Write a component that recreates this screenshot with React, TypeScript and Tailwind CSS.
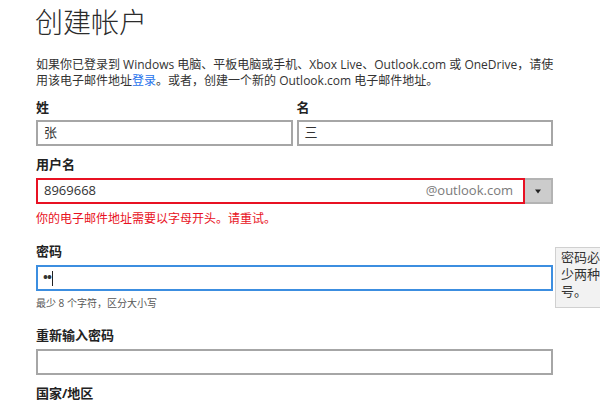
import React from "react";

const font = { fontFamily: '"Open Sans", "Noto Sans CJK SC", sans-serif' };

export default function App() {
  return (
    <div
      className="relative w-[600px] h-[400px] overflow-hidden bg-white text-[#262626]"
      style={font}
    >
      <div className="pl-[36px] pt-[4px] w-[553px]">
        <h1 className="h-[36px] leading-[36px] text-[28px] font-light text-[#2b2b2b] -ml-[1px]">
          创建帐户
        </h1>
        <p className="mt-[17px] text-[12px] leading-[16px] text-[#333] whitespace-nowrap">
          如果你已登录到 Windows 电脑、平板电脑或手机、Xbox Live、Outlook.com 或 OneDrive，请使
          <br />
          用该电子邮件地址<span className="text-[#2672ec]">登录</span>。或者，创建一个新的 Outlook.com 电子邮件地址。
        </p>

        <div className="mt-[10px] grid grid-cols-2 gap-x-[4px]">
          <div>
            <div className="h-[16px] leading-[16px] text-[13px] font-bold text-[#222]">姓</div>
            <div className="mt-[5px] h-[26px] border-2 border-[#a6a6a6] flex items-center px-[6px] text-[13px] text-[#333]">
              张
            </div>
          </div>
          <div>
            <div className="h-[16px] leading-[16px] text-[13px] font-bold text-[#222]">名</div>
            <div className="mt-[5px] h-[26px] border-2 border-[#a6a6a6] flex items-center px-[6px] text-[13px] text-[#333]">
              三
            </div>
          </div>
        </div>

        <div className="mt-[10px] h-[16px] leading-[16px] text-[13px] font-bold text-[#222]">用户名</div>
        <div className="mt-[6px] flex h-[26px]">
          <div className="flex-1 border-2 border-[#e81123] flex items-center justify-between pl-[6px] pr-[10px] text-[13px]">
            <span className="text-[#333]">8969668</span>
            <span className="text-[#7a7a7a]">@outlook.com</span>
          </div>
          <div className="w-[28px] bg-[#cccccc] border-2 border-l-0 border-[#b3b3b3] flex items-center justify-center">
            <svg width="8" height="5" viewBox="0 0 8 5">
              <path d="M1 0.5 L7 0.5 L4 4.5 Z" fill="#222" />
            </svg>
          </div>
        </div>
        <div className="mt-[7px] h-[16px] leading-[16px] text-[12px] text-[#e81123]">
          你的电子邮件地址需要以字母开头。请重试。
        </div>

        <div className="mt-[16px] h-[16px] leading-[16px] text-[13px] font-bold text-[#222]">密码</div>
        <div className="mt-[6px] h-[26px] border-2 border-[#3c8ee0] flex items-center pl-[5px] text-[13px] text-[#333]">
          <span className="tracking-[-1px] font-bold">••</span>
          <span className="ml-[1px] w-[1px] h-[15px] bg-[#222]" />
        </div>
        <div className="mt-[5px] h-[14px] leading-[14px] text-[10px] text-[#555]">
          最少 8 个字符，区分大小写
        </div>

        <div className="mt-[17px] h-[16px] leading-[16px] text-[13px] font-bold text-[#222]">重新输入密码</div>
        <div className="mt-[6px] h-[26px] border-2 border-[#a6a6a6]" />

        <div className="mt-[10px] h-[16px] leading-[16px] text-[13px] font-bold text-[#222]">国家/地区</div>
      </div>

      <div className="absolute left-[555px] top-[247px] w-[120px] h-[61px] bg-[#f2f2f2] border border-[#d0d0d0] pl-[5px] pt-[1px] text-[13px] leading-[17px] text-[#333]">
        密码必须包含至
        <br />
        少两种字符类型
        <br />
        号。
      </div>
    </div>
  );
}
